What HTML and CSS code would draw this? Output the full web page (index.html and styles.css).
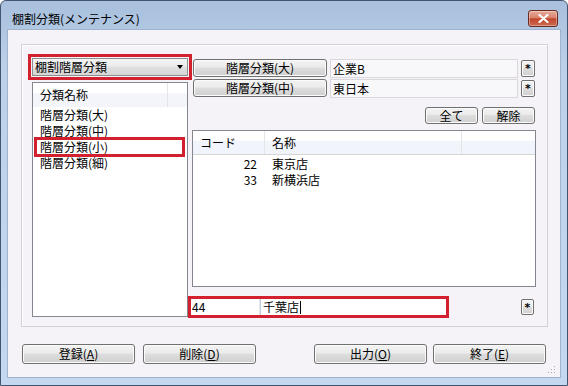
FILE: index.html
```html
<!DOCTYPE html>
<html lang="ja">
<head>
  <meta charset="UTF-8" />
  <title>棚割分類(メンテナンス)</title>
  <link rel="stylesheet" href="styles.css">
</head>
<body>
  <div class="window">
    <div class="titlebar">
      <span class="title">棚割分類(メンテナンス)</span>
      <button class="close">
        <svg width="11" height="9" viewBox="0 0 11 9"><path d="M1.5 1 L9.5 8 M9.5 1 L1.5 8" stroke="#fff" stroke-width="2.2" stroke-linecap="round"/></svg>
      </button>
    </div>

    <div class="client">
      <div class="group">
        <div class="left">
          <div class="combo">
            <span>棚割階層分類</span>
            <span class="arrow"></span>
          </div>
          <div class="list">
            <div class="list-head">
              <span class="list-col">分類名称</span>
              <span class="list-rest"></span>
            </div>
            <div class="list-item">階層分類(大)</div>
            <div class="list-item">階層分類(中)</div>
            <div class="list-item selected">階層分類(小)</div>
            <div class="list-item">階層分類(細)</div>
          </div>
        </div>

        <div class="right">
          <div class="field-row">
            <button class="btn hdr-btn">階層分類(大)</button>
            <div class="ro-field">企業B</div>
            <button class="btn ast">*</button>
          </div>
          <div class="field-row">
            <button class="btn hdr-btn">階層分類(中)</button>
            <div class="ro-field">東日本</div>
            <button class="btn ast">*</button>
          </div>
          <div class="select-row">
            <button class="btn small-btn">全て</button>
            <button class="btn small-btn">解除</button>
          </div>

          <div class="listview">
            <div class="lv-head">
              <span class="lv-code">コード</span>
              <span class="lv-name">名称</span>
              <span class="lv-rest"></span>
            </div>
            <div class="lv-body">
              <div class="lv-row"><span class="lv-code">22</span><span class="lv-name">東京店</span></div>
              <div class="lv-row"><span class="lv-code">33</span><span class="lv-name">新横浜店</span></div>
            </div>
          </div>

          <div class="input-row">
            <div class="entry">
              <div class="entry-code">44</div>
              <div class="entry-name">千葉店<span class="caret"></span></div>
            </div>
            <button class="btn ast ast-small">*</button>
          </div>
        </div>
      </div>

      <div class="footer">
        <button class="btn foot-btn">登録(<u>A</u>)</button>
        <button class="btn foot-btn">削除(<u>D</u>)</button>
        <button class="btn foot-btn push">出力(<u>O</u>)</button>
        <button class="btn foot-btn">終了(<u>E</u>)</button>
      </div>

      <svg class="grip" width="8" height="8" viewBox="0 0 8 8">
        <rect x="6" y="0" width="1" height="1" fill="#a9a9a9"/>
        <rect x="3" y="3" width="1" height="1" fill="#a9a9a9"/>
        <rect x="6" y="3" width="1" height="1" fill="#a9a9a9"/>
        <rect x="0" y="6" width="1" height="1" fill="#a9a9a9"/>
        <rect x="3" y="6" width="1" height="1" fill="#a9a9a9"/>
        <rect x="6" y="6" width="1" height="1" fill="#a9a9a9"/>
      </svg>
    </div>
  </div>
</body>
</html>
```

FILE: styles.css
```css
* {
  box-sizing: border-box;
}
body {
  margin: 0;
  background: #fff;
  font-family: "Noto Sans CJK JP", sans-serif;
  font-size: 12px;
  color: #000;
}
.window {
  width: 568px;
  height: 386px;
  border: 1px solid #435670;
  border-radius: 6px 6px 0 0;
  background: linear-gradient(#a8c0dd, #bdd2ea 70px, #c4d8ef);
  display: flex;
  flex-direction: column;
  overflow: hidden;
}
.titlebar {
  height: 29px;
  flex: none;
  display: flex;
  align-items: flex-start;
  padding: 0 9px 0 11px;
}
.title {
  flex: 1;
  margin-top: 11px;
  line-height: 14px;
}
.close {
  width: 30px;
  height: 17px;
  margin-top: 9px;
  padding: 0;
  border: 1px solid #6a2a21;
  border-radius: 3px;
  background: linear-gradient(#e8ab9a, #d8826b 45%, #c2462e 52%, #cc6b50);
  box-shadow: inset 0 0 0 1px rgba(255,255,255,0.35);
  display: flex;
  align-items: center;
  justify-content: center;
}
.client {
  flex: 1;
  margin: 0 7px 8px;
  background: #f5f3f7;
  box-shadow: 0 0 0 1px #9db3cf;
  position: relative;
  display: flex;
  flex-direction: column;
}
.group {
  height: 283px;
  margin: 14px 12px 0 13px;
  border: 1px solid #d3d1d7;
  box-shadow: inset 1px 1px 0 #fff;
  display: flex;
  gap: 4px;
  padding: 13px 11px 9px 10px;
}
.left {
  width: 156px;
  display: flex;
  flex-direction: column;
  gap: 6px;
}
.combo {
  height: 18px;
  border: 1px solid #8e8f8f;
  background: linear-gradient(#f4f4f4, #ececec 45%, #e0e0e0 50%, #d6d6d6);
  outline: 3px solid #d2202e;
  outline-offset: 1px;
  display: flex;
  align-items: center;
  justify-content: space-between;
  padding: 0 4px 0 2px;
  line-height: 14px;
}
.arrow {
  width: 0;
  height: 0;
  border-left: 3.5px solid transparent;
  border-right: 3.5px solid transparent;
  border-top: 4px solid #000;
}
.list {
  flex: 1;
  border: 1px solid #828790;
  background: #fff;
}
.list-head {
  height: 24px;
  display: flex;
  background: linear-gradient(#fff 40%, #f3f5fa 45%, #f3f5fa);
}
.list-col {
  width: 135px;
  border-right: 1px solid #e2e4e8;
  padding-left: 7px;
  line-height: 23px;
}
.list-rest {
  flex: 1;
}
.list-item {
  height: 16px;
  line-height: 16px;
  margin: 0 4px 0 3px;
  padding-left: 4px;
}
.list-item.selected {
  outline: 3px solid #d2202e;
  outline-offset: -1px;
}
.right {
  width: 344px;
  display: flex;
  flex-direction: column;
}
.btn {
  font-family: inherit;
  font-size: 12px;
  line-height: 14px;
  color: #000;
  padding: 0;
  border: 1px solid #707070;
  border-radius: 3px;
  background: linear-gradient(#f3f3f3, #ebebeb 45%, #dddddd 50%, #d0d0d0);
  box-shadow: inset 0 0 0 1px #fbfbfb;
}
.field-row {
  height: 20px;
  display: flex;
  align-items: center;
}
.hdr-btn {
  width: 134px;
  height: 18px;
  margin-left: 1px;
}
.ro-field {
  width: 188px;
  height: 19px;
  margin-left: 3px;
  border: 1px solid #dad8dc;
  background: #f8f7f9;
  padding-left: 2px;
  line-height: 17px;
}
.ast {
  width: 14px;
  height: 17px;
  margin-left: auto;
  margin-right: 1px;
  font-family: "DejaVu Sans", sans-serif;
  font-size: 11px;
  font-weight: bold;
  line-height: 15px;
  border-radius: 2px;
}
.ast-small {
  width: 13px;
  height: 16px;
  margin-right: 2px;
}
.select-row {
  height: 17px;
  margin-top: 9px;
  display: flex;
  justify-content: flex-end;
  gap: 4px;
  padding-right: 1px;
}
.small-btn {
  width: 53px;
  height: 17px;
}
.listview {
  flex: 1;
  margin-top: 6px;
  border: 1px solid #828790;
  background: #fff;
}
.lv-head {
  height: 24px;
  display: flex;
  border-bottom: 1px solid #d5d5d5;
  background: linear-gradient(#fff 40%, #f1f4fa 45%, #f1f4fa);
}
.lv-head span {
  line-height: 23px;
}
.lv-head .lv-code {
  text-align: left;
  padding: 0 0 0 7px;
  border-right: 1px solid #e3e5e8;
}
.lv-head .lv-name {
  width: 197px;
  border-right: 1px solid #e3e5e8;
}
.lv-code {
  width: 72px;
  text-align: right;
  padding-right: 8px;
}
.lv-name {
  padding-left: 7px;
}
.lv-rest {
  flex: 1;
}
.lv-body {
  padding-top: 1px;
}
.lv-row {
  display: flex;
  height: 16px;
  line-height: 16px;
}
.input-row {
  height: 16px;
  margin-top: 12px;
  margin-bottom: 2px;
  display: flex;
  align-items: center;
}
.entry {
  width: 255px;
  height: 16px;
  margin-left: -1px;
  display: flex;
  outline: 3px solid #d2202e;
  background: #fff;
}
.entry-code {
  width: 69px;
  border-right: 1px solid #e6e6e6;
  padding-left: 1px;
  line-height: 16px;
}
.entry-name {
  flex: 1;
  border-left: 1px solid #bfd0e3;
  padding-left: 2px;
  line-height: 16px;
  display: flex;
  align-items: center;
}
.caret {
  width: 1px;
  height: 13px;
  background: #000;
  margin-left: 1px;
}
.footer {
  display: flex;
  gap: 8px;
  margin-top: 17px;
  padding: 0 14px;
}
.foot-btn {
  width: 113px;
  height: 20px;
}
.footer .push {
  margin-left: auto;
  margin-right: -2px;
}
.grip {
  position: absolute;
  right: 4px;
  bottom: 3px;
}
```
